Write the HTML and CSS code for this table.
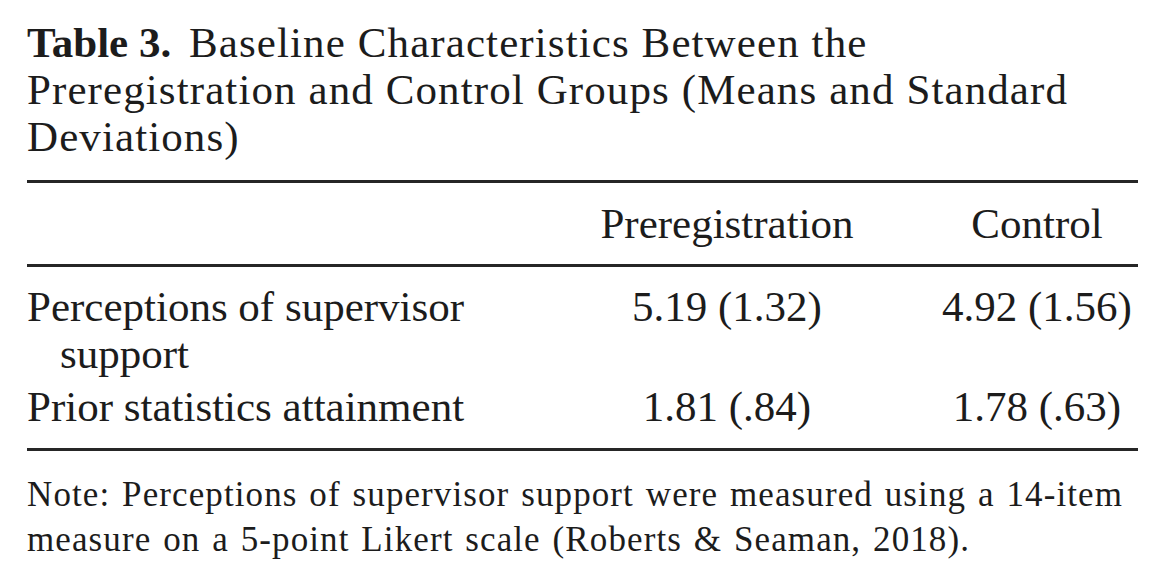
FILE: index.html
```html
<!DOCTYPE html>
<html lang="en">
<head>
    <meta charset="UTF-8">
    <meta name="viewport" content="width=device-width, initial-scale=1.0">
    <title>Table 3</title>
    <link rel="stylesheet" href="styles.css">
</head>
<body>
    <div class="table-wrap">
        <h1 class="caption"><span class="label">Table 3.</span> Baseline Characteristics Between the Preregistration and Control Groups (Means and Standard Deviations)</h1>

        <table class="data">
            <thead>
                <tr>
                    <th class="name"></th>
                    <th class="pre">Preregistration</th>
                    <th class="ctl">Control</th>
                </tr>
            </thead>
            <tbody>
                <tr class="first">
                    <td class="name">Perceptions of supervisor<br><span class="indent">support</span></td>
                    <td class="pre">5.19 (1.32)</td>
                    <td class="ctl">4.92 (1.56)</td>
                </tr>
                <tr class="last">
                    <td class="name">Prior statistics attainment</td>
                    <td class="pre">1.81 (.84)</td>
                    <td class="ctl">1.78 (.63)</td>
                </tr>
            </tbody>
        </table>

        <p class="note">Note: Perceptions of supervisor support were measured using a 14-item measure on a 5-point Likert scale (Roberts &amp; Seaman, 2018).</p>
    </div>
</body>
</html>
```

FILE: styles.css
```css
body {
    margin: 0;
    padding: 0;
    background-color: #fff;
    color: #1c1c1c;
    font-family: "Liberation Serif", "DejaVu Serif", serif;
}

.table-wrap {
    width: 1111px;
    padding: 19px 0 0 27px;
}

.caption {
    margin: 0;
    font-size: 43px;
    font-weight: normal;
    line-height: 47px;
    letter-spacing: 1.1px;
    width: 1100px;
}

.caption .label {
    font-weight: bold;
    letter-spacing: 0;
    padding-right: 6px;
}

.data {
    width: 100%;
    border-collapse: collapse;
    margin-top: 20px;
    font-size: 43px;
    line-height: 47px;
}

.data thead tr {
    border-top: 3px solid #262626;
    border-bottom: 3px solid #262626;
}

.data th {
    font-weight: normal;
    height: 81px;
    padding: 0;
}

.data td {
    padding: 0;
    vertical-align: top;
}

.data .name {
    width: 553px;
    text-align: left;
}

.data .pre {
    width: 294px;
    text-align: center;
}

.data .ctl {
    text-align: center;
    padding-left: 62px;
}

.data .first td {
    padding-top: 16px;
}

.data .last td {
    padding-top: 6px;
    padding-bottom: 18px;
}

.data .last {
    border-bottom: 3px solid #262626;
}

.indent {
    padding-left: 33px;
}

.note {
    margin: 21px 0 0;
    font-size: 35px;
    line-height: 45px;
    letter-spacing: 1.1px;
    word-spacing: 2px;
}
```
